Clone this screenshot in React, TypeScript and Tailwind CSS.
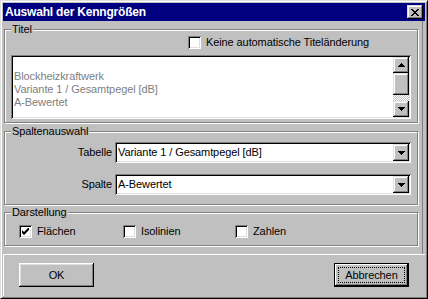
import React from 'react';

const raised =
  'shadow-[inset_-1px_-1px_0_#000,inset_1px_1px_0_#fff,inset_-2px_-2px_0_#808080,inset_2px_2px_0_#dfdfdf]';
const scrollBtn =
  'shadow-[inset_-1px_-1px_0_#000,inset_1px_1px_0_#dfdfdf,inset_-2px_-2px_0_#808080,inset_2px_2px_0_#fff]';
const sunken =
  'shadow-[inset_1px_1px_0_#808080,inset_-1px_-1px_0_#fff,inset_2px_2px_0_#000,inset_-2px_-2px_0_#dfdfdf]';
const etched = 'border border-[#808080] shadow-[inset_1px_1px_0_#fff,1px_1px_0_#fff]';

function Arrow({ up }: { up?: boolean }) {
  return (
    <svg width="7" height="4" viewBox="0 0 7 4" shapeRendering="crispEdges">
      <polygon points={up ? '3.5,0 7,4 0,4' : '0,0 7,0 3.5,4'} fill="#000" />
    </svg>
  );
}

function Check({ checked, label }: { checked?: boolean; label: string }) {
  return (
    <div className="flex items-center gap-[5px]">
      <div className={`w-[13px] h-[13px] bg-white flex items-center justify-center ${sunken}`}>
        {checked && (
          <svg width="7" height="7" viewBox="0 0 7 7">
            <polygon points="0,2 2,4 7,-1 7,2 2,7 0,5" fill="#000" />
          </svg>
        )}
      </div>
      <span>{label}</span>
    </div>
  );
}

function Combo({ value }: { value: string }) {
  return (
    <div className={`w-[296px] h-[21px] bg-white p-[2px] flex items-center ${sunken}`}>
      <span className="flex-1 pl-[1px]">{value}</span>
      <div className={`w-[16px] h-[17px] bg-[#c0c0c0] flex items-center justify-center ${scrollBtn}`}>
        <Arrow />
      </div>
    </div>
  );
}

function Group({ title, className, children }: { title: string; className: string; children: React.ReactNode }) {
  return (
    <div className={`relative w-[414px] shrink-0 ${etched} ${className}`}>
      <span className="absolute -top-[7px] left-[6px] bg-[#c0c0c0] px-[1px] leading-[13px]">{title}</span>
      {children}
    </div>
  );
}

export default function App() {
  return (
    <div className="w-[428px] h-[299px] bg-[#c0c0c0] border border-t-[#dfdfdf] border-l-[#dfdfdf] border-r-black border-b-black shadow-[inset_1px_1px_0_#fff,inset_-1px_-1px_0_#808080] p-[2px] flex flex-col text-[11px] leading-[13px] tracking-[-0.1px] text-black font-['Liberation_Sans',Arial,sans-serif]">
      {/* Title bar */}
      <div className="h-[18px] shrink-0 bg-[#000080] flex items-center pl-[2px] pr-[2px]">
        <span className="flex-1 text-white font-bold text-[12px] tracking-[-0.2px]">Auswahl der Kenngrößen</span>
        <div className={`w-[16px] h-[14px] bg-[#c0c0c0] flex items-center justify-center ${scrollBtn}`}>
          <svg width="8" height="7" viewBox="0 0 8 7" shapeRendering="crispEdges">
            <path d="M0 0h2v1h1v1h2v-1h1v-1h2v1h-1v1h-1v1h-1v1h1v1h1v1h1v1h-2v-1h-1v-1h-2v1h-1v1h-2v-1h1v-1h1v-1h1v-1h-1v-1h-1v-1h-1z" fill="#000" />
          </svg>
        </div>
      </div>

      {/* Main area */}
      <div className="h-[233px] shrink-0 mr-[2px] pl-[1px] border-r border-[#808080] flex flex-col">
        <Group title="Titel" className="mt-[8px] h-[94px]">
          <div className="mt-[6px] pl-[183px]">
            <Check label="Keine automatische Titeländerung" />
          </div>
          <div className={`mt-[6px] ml-[6px] w-[400px] h-[64px] bg-white p-[2px] flex ${sunken}`}>
            <div className="flex-1 pl-[1px] text-[#808080]">
              <div className="h-[13px]" />
              <div>Blockheizkraftwerk</div>
              <div>Variante 1 / Gesamtpegel [dB]</div>
              <div>A-Bewertet</div>
            </div>
            <div className="w-[16px] flex flex-col">
              <div className={`h-[16px] bg-[#c0c0c0] flex items-center justify-center ${scrollBtn}`}>
                <Arrow up />
              </div>
              <div className={`h-[22px] bg-[#c0c0c0] ${scrollBtn}`} />
              <div className="flex-1 bg-[repeating-conic-gradient(#c0c0c0_0%_25%,#ffffff_0%_50%)] bg-size-[2px_2px]" />
              <div className={`h-[16px] bg-[#c0c0c0] flex items-center justify-center ${scrollBtn}`}>
                <Arrow />
              </div>
            </div>
          </div>
        </Group>

        <Group title="Spaltenauswahl" className="mt-[8px] h-[74px]">
          <div className="pt-[10px] flex flex-col gap-[11px]">
            <div className="flex items-center gap-[3px]">
              <span className="w-[107px] text-right">Tabelle</span>
              <Combo value="Variante 1 / Gesamtpegel [dB]" />
            </div>
            <div className="flex items-center gap-[3px]">
              <span className="w-[107px] text-right">Spalte</span>
              <Combo value="A-Bewertet" />
            </div>
          </div>
        </Group>

        <Group title="Darstellung" className="mt-[7px] h-[34px]">
          <div className="pt-[12px] pl-[14px] flex">
            <div className="w-[104px]">
              <Check checked label="Flächen" />
            </div>
            <div className="w-[112px]">
              <Check label="Isolinien" />
            </div>
            <Check label="Zahlen" />
          </div>
        </Group>
      </div>

      {/* Button panel */}
      <div className="flex-1 border-t border-l border-white pt-[8px] pl-[15px] pr-[16px] flex justify-between items-start">
        <button className={`w-[75px] h-[24px] bg-[#c0c0c0] ${raised}`}>OK</button>
        <button className="w-[75px] h-[24px] bg-[#c0c0c0] border border-black">
          <div className="w-full h-full p-[3px] shadow-[inset_-1px_-1px_0_#000,inset_1px_1px_0_#fff,inset_-2px_-2px_0_#808080]">
            <div className="w-full h-full border border-dotted border-black flex items-center justify-center">
              Abbrechen
            </div>
          </div>
        </button>
      </div>
    </div>
  );
}
